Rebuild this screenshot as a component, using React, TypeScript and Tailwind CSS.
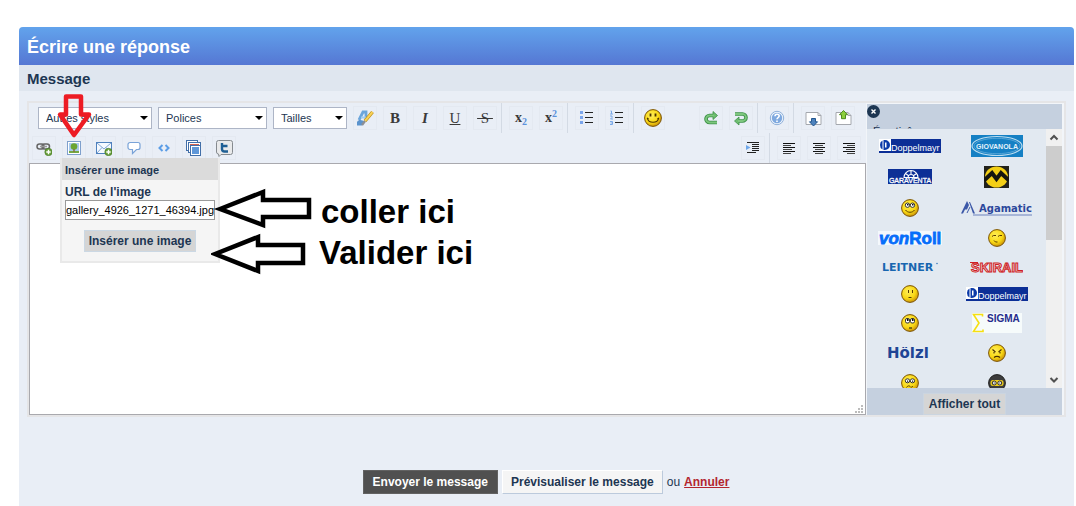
import { useState } from "react";

type Face =
  | "smile"
  | "lookup"
  | "smug"
  | "blank"
  | "wonder"
  | "angry"
  | "worried"
  | "ninja";

const Smiley = ({ face, id }: { face: Face; id: string }) => (
  <svg viewBox="0 0 18 18" className="w-[18px] h-[18px]">
    <defs>
      <radialGradient id={id} cx="0.4" cy="0.35" r="0.7">
        <stop offset="0" stopColor="#ffee5a" />
        <stop offset="0.6" stopColor="#f9d813" />
        <stop offset="1" stopColor="#c58a06" />
      </radialGradient>
    </defs>
    <circle cx="9" cy="9" r="8.4" fill={face === "ninja" ? "#3c3c3c" : `url(#${id})`} stroke={face === "ninja" ? "#222" : "#7a5206"} strokeWidth="1" />
    {face === "smile" && (
      <g fill="none" stroke="#4a3000" strokeWidth="1.2">
        <path d="M6.5 4.5v3M11.5 4.5v3" strokeWidth="1.8" />
        <path d="M3.5 9.5c1 5 10 5 11 0" />
        <path d="M3 9l1.5 1M15 9l-1.5 1" />
      </g>
    )}
    {face === "lookup" && (
      <g>
        <ellipse cx="6.5" cy="6.2" rx="2.2" ry="2.2" fill="#fff" stroke="#222" strokeWidth="0.9" />
        <ellipse cx="11.5" cy="6.2" rx="2.2" ry="2.2" fill="#fff" stroke="#222" strokeWidth="0.9" />
        <path d="M6 5h1.5v1.5H6zM11 5h1.5v1.5H11z" fill="#111" />
        <path d="M4.5 11c2 3 7 3 9 0" fill="none" stroke="#5a3c00" />
      </g>
    )}
    {face === "smug" && (
      <path d="M4 7.5l1.5-1H8M10 7.5l1.5-1H14M6 11.5l1.5 1.500h2" fill="none" stroke="#5a3c00" />
    )}
    {face === "blank" && (
      <path d="M7.500 5v3M11.500 5v3M7.500 12.500h3" fill="none" stroke="#5a3c00" />
    )}
    {face === "wonder" && (
      <g>
        <rect x="4.5" y="4.5" width="4" height="4.5" rx="1.5" fill="#fff" stroke="#222" strokeWidth="0.9" />
        <rect x="9.5" y="4.5" width="4" height="4.5" rx="1.5" fill="#fff" stroke="#222" strokeWidth="0.9" />
        <path d="M6 5h1.5v2H6zM11 5h1.5v2H11zM8 13.5h3v1H8z" fill="#111" />
      </g>
    )}
    {face === "angry" && (
      <path d="M4.5 5.5l3 2.5M13.5 5.5l-3 2.5M6 8v1.5M12 8v1.5M6 13.5c1.5-1.5 4.5-1.5 6 0" fill="none" stroke="#4a3000" strokeWidth="1.1" />
    )}
    {face === "worried" && (
      <g>
        <ellipse cx="6.5" cy="6.8" rx="2.2" ry="2" fill="#fff" stroke="#222" strokeWidth="0.9" />
        <ellipse cx="11.5" cy="6.8" rx="2.2" ry="2" fill="#fff" stroke="#222" strokeWidth="0.9" />
        <path d="M6 6.5h1.2v1.2H6zM11 6.5h1.2v1.2H11z" fill="#111" />
        <path d="M5.5 13.5c1-2 3-2 3.5-1s2 1 3-.5" fill="none" stroke="#5a3c00" />
      </g>
    )}
    {face === "ninja" && (
      <g>
        <rect x="2.5" y="6" width="13" height="6" rx="2.5" fill="#f0cf1c" />
        <circle cx="6.2" cy="9" r="2" fill="#fff" stroke="#222" />
        <circle cx="11.8" cy="9" r="2" fill="#fff" stroke="#222" />
        <path d="M5.7 8.5h1v1h-1zM11.3 8.5h1v1h-1z" fill="#111" />
      </g>
    )}
  </svg>
);

const Doppelmayr = () => (
  <svg width="62" height="14" viewBox="0 0 62 14">
    <rect width="62" height="14" fill="#0c2f96" />
    <rect width="12" height="12" fill="#fff" />
    <path d="M1 6a5 5 0 0 1 2.500-4.500v9A5 5 0 0 1 1 6zM4.500 1H6a5 5 0 0 1 0 10H4.500z" fill="#0b3aa8" />
    <rect x="6" y="3.500" width="1.500" height="5" fill="#fff" />
    <text x="12" y="12" fontSize="9" fill="#fff">Doppelmayr</text>
  </svg>
);

const Garaventa = () => (
  <svg width="44" height="15" viewBox="0 0 44 15">
    <rect width="44" height="15" fill="#0c2f96" />
    <path d="M16 8.500a6.500 6.500 0 0 1 14 0zM20 8.500a3 3 0 0 1 6 0M23 2v4M17.500 4.500L21 7M28.500 4.500L25 7" fill="none" stroke="#fff" strokeWidth="1.1" />
    <text x="22" y="14" fontSize="7" textAnchor="middle" fill="#fff" stroke="#fff" strokeWidth="0.300">GARAVENTA</text>
  </svg>
);

const Giovanola = () => (
  <svg width="52" height="22" viewBox="0 0 52 22">
    <rect width="52" height="22" fill="#1580c4" />
    <ellipse cx="26" cy="11" rx="25" ry="9.5" fill="none" stroke="#b9dcf0" strokeWidth="1.2" />
    <ellipse cx="26" cy="11" rx="23" ry="7.7" fill="none" stroke="#6fb3de" strokeWidth="0.7" />
    <text x="26" y="14" fontSize="7" fontWeight="bold" textAnchor="middle" fill="#e4f3fb">GIOVANOLA</text>
  </svg>
);

const MLogo = () => (
  <svg width="25" height="22" viewBox="0 0 25 22">
    <rect width="25" height="22" fill="#22221c" />
    <ellipse cx="12.5" cy="11" rx="11.5" ry="10.5" fill="#f3cf16" />
    <path d="M0 14.500L8 7l4.500 6L17 7l8 7.500" fill="none" stroke="#16160f" strokeWidth="4" />
  </svg>
);

const Agamatic = () => (
  <svg width="71" height="16" viewBox="0 0 71 16">
    <path d="M0 13.500L6 1l2 4-2 4.500H4l-2 4zM8 2h1l5 11.500h-2z" fill="#3c58a8" />
    <path d="M6 13l3-6" stroke="#3c58a8" />
    <path d="M12 15h59" stroke="#6c82bd" />
    <text x="18" y="12" fontSize="10" fontWeight="bold" fill="#2c489c" fontFamily="'DejaVu Sans', sans-serif">Agamatic</text>
  </svg>
);

const VonRoll = () => (
  <svg width="64" height="15" viewBox="0 0 64 15">
    <rect width="64" height="14" fill="#f4f8fc" />
    <text x="1" y="13" fontSize="17" fontWeight="bold" fill="#066dfa" stroke="#066dfa" strokeWidth="0.8">
      <tspan fontStyle="italic">von</tspan>
      <tspan>Roll</tspan>
    </text>
  </svg>
);

const Leitner = () => (
  <svg width="57" height="12" viewBox="0 0 57 12">
    <text x="0" y="10" fontSize="11" fontWeight="bold" fill="#1866b0" fontFamily="'DejaVu Sans', sans-serif">LEITNER</text>
    <circle cx="55" cy="2.500" r="0.7" fill="#1866b0" />
  </svg>
);

const Skirail = () => (
  <svg width="53" height="14" viewBox="0 0 53 14">
    <text x="1" y="12" fontSize="13" fontWeight="bold" fill="#f3d9dc" stroke="#cf1f26" strokeWidth="1">SKIRAIL</text>
    <path d="M0 2.500h8" stroke="#cf1f26" />
  </svg>
);

const Sigma = () => (
  <svg width="50" height="20" viewBox="0 0 50 20">
    <rect width="50" height="20" fill="#f6fbfb" />
    <path d="M10.500 3.500V1.500H1.500L7 10l-5.500 8.500h9.500v-2" fill="none" stroke="#f5df12" strokeWidth="1.6" />
    <text x="15" y="9" fontSize="10" fontWeight="bold" fill="#252c8c">SIGMA</text>
  </svg>
);

const Holzl = () => (
  <svg width="46" height="13" viewBox="0 0 46 13">
    <text x="0" y="11" fontSize="15" fontWeight="bold" fill="#1f4595" fontFamily="'DejaVu Sans', sans-serif">Hölzl</text>
  </svg>
);

const emoticons = [
  { h: "h-[31px]", left: <Doppelmayr />, right: <Giovanola /> },
  { h: "h-[31px]", left: <Garaventa />, right: <MLogo /> },
  { h: "h-[31px]", left: <Smiley face="lookup" id="s1" />, right: <Agamatic /> },
  { h: "h-[30px]", left: <VonRoll />, right: <Smiley face="smug" id="s2" /> },
  { h: "h-[28px]", left: <Leitner />, right: <Skirail /> },
  { h: "h-[26px]", left: <Smiley face="blank" id="s3" />, right: <Doppelmayr /> },
  { h: "h-[31px]", left: <Smiley face="wonder" id="s4" />, right: <Sigma /> },
  { h: "h-[30px]", left: <Holzl />, right: <Smiley face="angry" id="s5" /> },
  { h: "h-[30px]", left: <Smiley face="worried" id="s6" />, right: <Smiley face="ninja" id="s7" /> },
];

const ToolButton = ({ label, children }: { label: string; children: React.ReactNode }) => (
  <button
    type="button"
    aria-label={label}
    className="w-6 h-6 mx-[3px] shrink-0 flex items-center justify-center border border-[#e4e9f1] text-[#3a3a3a]"
  >
    {children}
  </button>
);

const Group = ({ last, children }: { last?: boolean; children: React.ReactNode }) => (
  <div className={`flex items-center h-[30px] ${last ? "" : "border-r border-[#d3dae4] pr-px mr-1"}`}>
    {children}
  </div>
);

const ToolSelect = ({ label, width }: { label: string; width: string }) => (
  <div className={`relative mx-[3px] ${width}`}>
    <select
      aria-label={label}
      className="appearance-none block w-full h-[22px] pl-[7px] bg-white border border-[#adb5c6] text-[11px] leading-5 text-[#1d3652]"
    >
      <option>{label}</option>
    </select>
    <svg viewBox="0 0 8 4" className="absolute right-1 top-[9px] w-2 h-1 pointer-events-none">
      <path d="M0 0h8L4 4z" fill="#000" />
    </svg>
  </div>
);

const Lines = ({ rows }: { rows: number[][] }) => (
  <svg width="16" height="16" viewBox="0 0 16 16" shapeRendering="crispEdges">
    {rows.map(([x, w], i) => (
      <rect key={i} x={x} y={3 + i * 2} width={w} height="1" fill={i % 2 ? "#444" : "#111"} />
    ))}
  </svg>
);

const PlusBadge = () => (
  <g>
    <circle cx="12.5" cy="12" r="3.7" fill="#6aa03c" stroke="#3f7420" strokeWidth="0.6" />
    <path d="M12.5 9.8v4.4M10.3 12h4.4" stroke="#fff" strokeWidth="1.4" />
  </g>
);

const LinkIcon = () => (
  <svg width="16" height="16" viewBox="0 0 16 16">
    <g fill="none" stroke="#666" strokeWidth="1.5">
      <rect x="1" y="4" width="7" height="5" rx="2.5" />
      <rect x="6" y="4" width="7.5" height="5" rx="2.5" />
      <path d="M4 6.500h7" stroke="#999" />
    </g>
    <PlusBadge />
  </svg>
);

const ImageIcon = () => (
  <svg width="16" height="16" viewBox="0 0 16 16">
    <rect x="1.5" y="1.5" width="13" height="13" fill="#fff" stroke="#7fa0cc" />
    <rect x="3" y="3" width="10" height="10" fill="#a9cbee" />
    <rect x="3" y="11" width="10" height="2" fill="#75a843" />
    <circle cx="8" cy="6.5" r="3.3" fill="#6ba532" />
    <path d="M8 9v3" stroke="#8a6a35" strokeWidth="1.4" />
  </svg>
);

const MailIcon = () => (
  <svg width="16" height="16" viewBox="0 0 16 16">
    <rect x="0.5" y="2.5" width="15" height="11" fill="#f6faff" stroke="#4f81bd" />
    <path d="M1 3l7 6 7-6M1 13l5-5.500M15 13l-5-5.500" fill="none" stroke="#7fa5d4" />
    <PlusBadge />
  </svg>
);

const QuoteIcon = () => (
  <svg width="16" height="16" viewBox="0 0 16 16">
    <path d="M4 2.500h8a2 2 0 0 1 2 2v3a2 2 0 0 1-2 2h-1.500L6.500 13.500V9.500H4a2 2 0 0 1-2-2v-3a2 2 0 0 1 2-2z" fill="#fff" stroke="#79a3d8" strokeWidth="1.2" />
  </svg>
);

const CodeIcon = () => (
  <svg width="16" height="16" viewBox="0 0 16 16">
    <path d="M6.500 5L3.500 8l3 3M9.500 5l3 3-3 3" fill="none" stroke="#5b9de6" strokeWidth="2" />
  </svg>
);

const GalleryIcon = () => (
  <svg width="16" height="16" viewBox="0 0 16 16">
    <rect x="0.5" y="0.5" width="11" height="10" fill="#fff" stroke="#426fa8" />
    <rect x="2" y="2" width="8" height="7" fill="#77b255" />
    <rect x="2.5" y="2.5" width="12" height="10" fill="#fff" stroke="#426fa8" />
    <rect x="4" y="4" width="9" height="7" fill="#d4614e" />
    <rect x="4.500" y="5.500" width="10" height="10" fill="#fff" stroke="#426fa8" />
    <rect x="6" y="7" width="7" height="7" fill="#5f97d8" />
  </svg>
);

const TwitterIcon = () => (
  <svg width="17" height="17" viewBox="0 0 17 17">
    <path d="M2.500.500h12a2 2 0 0 1 2 2v10a2 2 0 0 1-2 2H5l-2 2-.5-2.500a2 2 0 0 1-2-2V2.500a2 2 0 0 1 2-2z" fill="#e9eaeb" stroke="#858a8f" />
    <path d="M6 3v6a2.500 2.500 0 0 0 2.500 2.500H12M6 6h5.500" fill="none" stroke="#1f5f94" strokeWidth="2.400" />
  </svg>
);

const BrushIcon = () => (
  <svg width="18" height="17" viewBox="0 0 18 17">
    <path d="M3 10L7 2h3v7" fill="none" stroke="#6ba5db" strokeWidth="2.800" />
    <path d="M5 7.500h5" stroke="#9fcbf0" strokeWidth="2" />
    <path d="M1 12c2-3 5-2 8 0l-3 3.500H1z" fill="#5a93cd" />
    <path d="M16.500 2L9 11" stroke="#b8860b" strokeWidth="3.400" />
    <path d="M16.500 2L9 11" stroke="#f8d258" strokeWidth="2" />
    <path d="M9 11L6 15" stroke="#8b8f96" strokeWidth="2.400" />
  </svg>
);

const ListIcon = ({ numbered }: { numbered?: boolean }) => (
  <svg width="16" height="16" viewBox="0 0 16 16">
    {[2, 7, 12].map((y, i) =>
      numbered ? (
        <path
          key={y}
          d={["M1.500 1h1v3M1 4h3", "M1 6h2v1.500L1.500 9H4", "M1 11.500h2.500v3H1M1.500 13h2"][i]}
          fill="none"
          stroke="#7aa9e8"
        />
      ) : (
        <rect key={y} x="1" y={y - 1} width="3" height="3" fill="#7aa5ec" />
      )
    )}
    <path d="M6 2.500h8M6 7.500h8M6 12.500h8" stroke="#222" shapeRendering="crispEdges" />
  </svg>
);

const UndoIcon = ({ flip }: { flip?: boolean }) => {
  const curve = flip ? "M2 4h7.500a3.500 3.500 0 0 1 0 7H5" : "M14 12.500H6.500a3.500 3.500 0 0 1 0-7H11";
  return (
    <svg width="16" height="16" viewBox="0 0 16 16">
      <path d={curve} fill="none" stroke="#3d9148" strokeWidth="3.600" />
      <path d={flip ? "M6 7v8L1.500 11z" : "M10 1.500v8L14.500 5.500z"} fill="#6cbd6f" stroke="#3d9148" strokeWidth="0.8" />
      <path d={curve} fill="none" stroke="#7cc67d" strokeWidth="1.800" />
    </svg>
  );
};

const HelpIcon = () => (
  <svg width="16" height="16" viewBox="0 0 16 16">
    <circle cx="8" cy="8" r="6.7" fill="#eef4fb" stroke="#8fb0da" />
    <circle cx="8" cy="8" r="5.2" fill="#7fa9df" />
    <path d="M6 6.300c0-2.800 4.200-2.600 4.200-.2C10.200 7.600 8 7.600 8 9.300M8 10.500v1.600" fill="none" stroke="#fff" strokeWidth="1.6" />
  </svg>
);

const PageIcon = ({ up }: { up?: boolean }) => (
  <svg width="17" height="17" viewBox="0 0 17 17">
    <path d="M1 2.500h12l3 3v9H1z" fill="#fff" stroke="#a5a8ae" />
    <path d="M13 2.500v3h3" fill="none" stroke="#a5a8ae" />
    {up ? (
      <path d="M8.500.500l4 4.200H10.500v4h-4v-4H4.500z" fill="#8ccf3c" stroke="#4d8b1f" />
    ) : (
      <path d="M8.500 16l-4-4.200h2V8.500h4v3.300h2z" fill="#4d82bd" stroke="#23568f" />
    )}
  </svg>
);

const IndentIcon = () => (
  <svg width="16" height="16" viewBox="0 0 16 16">
    <path d="M2 2.500h12M7 4.500h7M7 6.500h7M7 8.500h7M7 10.500h7M2 12.500h9" stroke="#222" shapeRendering="crispEdges" />
    <path d="M1 5l4.500 2.500L1 10z" fill="#6fa8ea" />
  </svg>
);

const InsertImagePopup = () => {
  const [url, setUrl] = useState("gallery_4926_1271_46394.jpg");

  return (
    <div className="absolute left-[31px] top-[55px] z-10 w-[160px] border-2 border-t-0 border-[#e9e9e9] bg-[#f5f5f5]">
      <h3 className="h-[22px] px-[3px] bg-[#dbdbdb] text-[11px] leading-6 font-bold whitespace-nowrap">
        Insérer une image
      </h3>
      <div className="px-[3px] pt-1 pb-[9px]">
        <label htmlFor="image-url" className="block text-xs leading-4 font-bold">
          URL de l'image
        </label>
        <input
          id="image-url"
          type="text"
          value={url}
          onChange={(e) => setUrl(e.target.value)}
          className="block w-full h-5 px-0 bg-white border border-[#9a9a9a] text-[11px] text-black outline-none"
        />
        <button
          type="button"
          className="block mx-auto mt-[10px] h-[22px] px-1 border border-[#cbd8e4] bg-[#d5d5d5] text-xs font-bold whitespace-nowrap"
        >
          Insérer une image
        </button>
      </div>
    </div>
  );
};

// Flèches et consignes posées par-dessus l'éditeur
const Annotations = () => (
  <>
    <svg width="36" height="48" viewBox="0 0 36 48" className="absolute z-20 left-[27px] -top-[11px] pointer-events-none">
      <path d="M10 4.500h15v18h8L18 43 4 22.500h6z" fill="none" stroke="#ed1c24" strokeWidth="4.500" strokeLinejoin="round" />
    </svg>
    <div className="absolute z-20 left-[182px] top-[84px] flex flex-col pointer-events-none">
      <div className="flex items-center h-[44px]">
        <svg width="102" height="44" viewBox="0 0 102 44">
          <path d="M9 22L52 5v8h46v17H52v8z" fill="#fff" stroke="#000" strokeWidth="4.5" />
        </svg>
        <p className="ml-2 pt-[6px] text-[33px] leading-[44px] font-bold text-black whitespace-nowrap">coller ici</p>
      </div>
      <div className="flex items-center h-[44px]">
        <svg width="96" height="44" viewBox="0 0 96 44">
          <path d="M4 23L47 6v8h45v18H47v8z" fill="#fff" stroke="#000" strokeWidth="4.5" />
        </svg>
        <p className="ml-3 text-[33px] leading-[44px] font-bold text-black whitespace-nowrap">Valider ici</p>
      </div>
    </div>
  </>
);

const Toolbar = () => (
  <div className="h-[60px]">
    <div className="flex items-center justify-between pr-2">
      <div className="flex items-center">
        <Group>
          <div className="flex pl-[6px]">
            <ToolSelect label="Autres styles" width="w-[114px]" />
            <ToolSelect label="Polices" width="w-[109px]" />
            <ToolSelect label="Tailles" width="w-[74px]" />
          </div>
          <ToolButton label="Supprimer le format"><BrushIcon /></ToolButton>
          <ToolButton label="Gras"><span className="font-[Liberation_Serif,serif] text-[15px] leading-4 font-bold">B</span></ToolButton>
          <ToolButton label="Italique"><span className="font-[Liberation_Serif,serif] text-[15px] leading-4 font-bold italic">I</span></ToolButton>
          <ToolButton label="Souligné"><span className="font-[Liberation_Serif,serif] text-[15px] leading-4 underline">U</span></ToolButton>
          <ToolButton label="Barré">
            <span className="font-[Liberation_Serif,serif] text-[15px] leading-4 line-through whitespace-pre">{" S "}</span>
          </ToolButton>
        </Group>
        <Group>
          <ToolButton label="Indice">
            <span className="font-[Liberation_Serif,serif] text-sm leading-4 font-bold">x<sub className="text-[10px] text-[#5b92dc]">2</sub></span>
          </ToolButton>
          <ToolButton label="Exposant">
            <span className="font-[Liberation_Serif,serif] text-sm leading-4 font-bold">x<sup className="text-[10px] text-[#5b92dc]">2</sup></span>
          </ToolButton>
        </Group>
        <Group>
          <ToolButton label="Liste à puces"><ListIcon /></ToolButton>
          <ToolButton label="Liste numérotée"><ListIcon numbered /></ToolButton>
        </Group>
        <Group last>
          <ToolButton label="Émoticônes"><Smiley face="smile" id="s0" /></ToolButton>
        </Group>
      </div>
      <div className="flex items-center">
        <Group>
          <ToolButton label="Annuler la frappe"><UndoIcon /></ToolButton>
          <ToolButton label="Rétablir"><UndoIcon flip /></ToolButton>
        </Group>
        <Group>
          <ToolButton label="Aide"><HelpIcon /></ToolButton>
        </Group>
        <Group last>
          <ToolButton label="Agrandir"><PageIcon /></ToolButton>
          <ToolButton label="Réduire"><PageIcon up /></ToolButton>
        </Group>
      </div>
    </div>
    <div className="flex items-center justify-between pr-[2px]">
      <Group last>
        <ToolButton label="Lien"><LinkIcon /></ToolButton>
        <ToolButton label="Image"><ImageIcon /></ToolButton>
        <ToolButton label="Courriel"><MailIcon /></ToolButton>
        <ToolButton label="Citation"><QuoteIcon /></ToolButton>
        <ToolButton label="Code"><CodeIcon /></ToolButton>
        <ToolButton label="Médias"><GalleryIcon /></ToolButton>
        <ToolButton label="Twitter"><TwitterIcon /></ToolButton>
      </Group>
      <div className="flex items-center">
        <Group>
          <ToolButton label="Retrait"><IndentIcon /></ToolButton>
        </Group>
        <Group last>
          <ToolButton label="Aligner à gauche"><Lines rows={[[2, 12], [2, 8], [2, 12], [2, 9], [2, 12], [2, 8]]} /></ToolButton>
          <ToolButton label="Centrer"><Lines rows={[[2, 12], [4, 8], [2, 12], [4, 8], [2, 12], [4, 8]]} /></ToolButton>
          <ToolButton label="Aligner à droite"><Lines rows={[[2, 12], [6, 8], [2, 12], [5, 9], [2, 12], [6, 8]]} /></ToolButton>
        </Group>
      </div>
    </div>
  </div>
);

const EmoticonPanel = () => (
  <aside className="flex flex-col w-[198px] shrink-0 border-t border-l border-r-2 border-[#f2f5f9] bg-[#c5d0df]">
    <div className="relative h-[25px] pl-[6px] pt-[19px] overflow-hidden text-[11px] leading-4">
      <button type="button" aria-label="Fermer" className="absolute left-0 top-px">
        <svg width="13" height="13" viewBox="0 0 13 13" className="block">
          <circle cx="6.5" cy="6.5" r="6.5" fill="#1d3652" />
          <path d="M4.500 4.500l4 4M8.500 4.500l-4 4" stroke="#fff" strokeWidth="1.4" />
        </svg>
      </button>
      Émoticônes
    </div>
    <div className="flex h-[259px] bg-[#e2e9f1] overflow-hidden">
      <div className="flex-1 pt-px pr-[6px]">
        {emoticons.map((row, i) => (
          <div key={i} className={`grid grid-cols-2 ${row.h}`}>
            <button type="button" className="flex items-center justify-center">{row.left}</button>
            <button type="button" className="flex items-center justify-center">{row.right}</button>
          </div>
        ))}
      </div>
      <div className="flex flex-col w-4 bg-[#f0f0f0]">
        <svg viewBox="0 0 16 17" className="w-4 h-[17px]">
          <path d="M4.500 10.500L8 7l3.500 3.500" fill="none" stroke="#505050" strokeWidth="2" />
        </svg>
        <div className="h-[94px] bg-[#cdcdcd]" />
        <svg viewBox="0 0 16 17" className="w-4 h-[17px] mt-auto">
          <path d="M4.500 7L8 10.500 11.500 7" fill="none" stroke="#505050" strokeWidth="2" />
        </svg>
      </div>
    </div>
    <div className="flex justify-center pt-[5px]">
      <button type="button" className="h-[22px] px-[5px] border border-[#cbd5e0] bg-[#d5d5d5] text-xs font-bold whitespace-nowrap">
        Afficher tout
      </button>
    </div>
  </aside>
);

export default function App() {
  const [message, setMessage] = useState("");

  return (
    <div className="bg-white pt-[27px] pl-[19px] pr-[2px] font-[Liberation_Sans,Arial,sans-serif] text-[#1d3652]">
      <form className="bg-[#e9eef6] rounded-t-[4px] pb-3" onSubmit={(e) => e.preventDefault()}>
        <h1 className="h-[38px] px-2 rounded-t-[4px] bg-linear-to-b from-[#62a3ec] to-[#5577d3] text-lg leading-10 font-bold text-white">
          Écrire une réponse
        </h1>
        <h2 className="h-[26px] px-2 bg-[#dfe6ef] text-[15px] leading-7 font-bold">
          <label htmlFor="message">Message</label>
        </h2>

        <div className="relative flex mx-2 mt-[10px] border-2 border-[#e5e5e7]">
          <div className="flex-1 min-w-0">
            <Toolbar />
            <textarea
              id="message"
              value={message}
              onChange={(e) => setMessage(e.target.value)}
              className="block w-full h-[252px] bg-white border border-[#a9a9ae] resize-none outline-none"
            />
          </div>
          <svg viewBox="0 0 10 10" className="absolute bottom-[1px] right-[200px] w-[10px] h-[10px]">
            <path d="M7 1h2v2H7zM4 4h2v2H4zM7 4h2v2H7zM1 7h2v2H1zM4 7h2v2H4zM7 7h2v2H7z" fill="#bcbcbc" />
          </svg>
          <EmoticonPanel />
          <InsertImagePopup />
          <Annotations />
        </div>

        <div className="flex items-center justify-center gap-1 mt-[53px] text-xs pr-[1px]">
          <button type="submit" className="h-6 px-[9px] bg-[#505050] border border-[#626262] font-bold text-white whitespace-nowrap">
            Envoyer le message
          </button>
          <button type="button" className="h-6 px-2 bg-[#f5f5f5] border border-t-white border-l-white border-r-[#bccadc] border-b-[#bccadc] font-bold whitespace-nowrap">
            Prévisualiser le message
          </button>
          <span>ou</span>
          <a href="#" className="font-bold text-[#b3252f] underline">Annuler</a>
        </div>
      </form>
    </div>
  );
}
